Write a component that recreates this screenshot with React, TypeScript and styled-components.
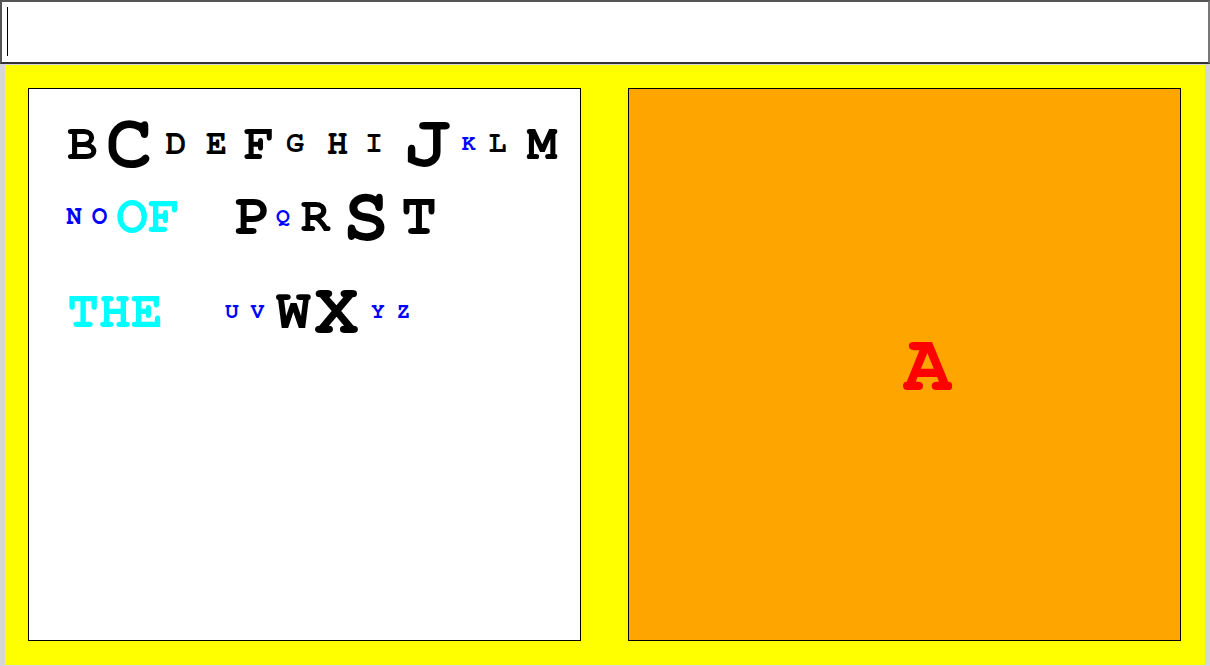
import React from "react";
import styled, { createGlobalStyle } from "styled-components";

const CAP = 0.57;
const FONT = `FreeMono, "Liberation Mono", "Courier New", monospace`;

const Global = createGlobalStyle`
  html, body { margin: 0; padding: 0; background: #d6d6d6; }
  body { font-family: ${FONT}; }
`;

const Page = styled.div`
  width: 1210px;
  height: 666px;
  overflow: hidden;
`;

const InputBar = styled.div`
  box-sizing: border-box;
  width: 1210px;
  height: 64px;
  background: #fff;
  border: 2px solid #555;
  border-right-color: #777;
  border-bottom-color: #333;
  padding: 5px 0 0 5px;
`;

const Caret = styled.div`
  width: 1px;
  height: 49px;
  background: #000;
`;

const Stage = styled.div`
  box-sizing: border-box;
  margin: 1px 5px 0;
  height: 600px;
  background: #ffff00;
  padding: 23px 24px 24px 23px;
  display: flex;
  gap: 47px;
`;

const Board = styled.div`
  box-sizing: border-box;
  width: 553px;
  height: 553px;
  border: 1px solid #000;
  background: #fff;
  display: flex;
  flex-direction: column;
  padding-top: 24px;
`;

const Target = styled.div`
  box-sizing: border-box;
  width: 553px;
  height: 553px;
  border: 1px solid #000;
  background: #ffa500;
  display: flex;
  align-items: center;
  justify-content: center;
`;

const Row = styled.div<{ $gap: number }>`
  display: flex;
  align-items: center;
  height: 60px;
  margin-top: ${(p) => p.$gap}px;
`;

const Glyph = styled.span<{ $size: number; $color: string }>`
  display: block;
  font-family: ${FONT};
  font-weight: 700;
  font-size: ${(p) => p.$size}px;
  line-height: 1;
  color: ${(p) => p.$color};
  white-space: pre;
`;

const BigA = styled(Glyph)`
  margin-left: 46px;
`;

type Item = { t: string; cx: number; h: number; c: string };

const K = "#000";
const B = "#0000ff";
const CY = "#00ffff";

const rows: { gap: number; items: Item[] }[] = [
  {
    gap: 0,
    items: [
      { t: "B", cx: 82.5, h: 29, c: K },
      { t: "C", cx: 129, h: 44, c: K },
      { t: "D", cx: 176, h: 20, c: K },
      { t: "E", cx: 216.5, h: 20, c: K },
      { t: "F", cx: 259, h: 29, c: K },
      { t: "G", cx: 295, h: 17, c: K },
      { t: "H", cx: 337.5, h: 20, c: K },
      { t: "I", cx: 374, h: 17, c: K },
      { t: "J", cx: 427.5, h: 43, c: K },
      { t: "K", cx: 468.5, h: 13, c: B },
      { t: "L", cx: 497.5, h: 17, c: K },
      { t: "M", cx: 542, h: 29, c: K },
    ],
  },
  {
    gap: 13,
    items: [
      { t: "N", cx: 74, h: 15, c: B },
      { t: "O", cx: 99.5, h: 15, c: B },
      { t: "OF", cx: 148, h: 30, c: CY },
      { t: "P", cx: 253, h: 34, c: K },
      { t: "Q", cx: 283, h: 13, c: B },
      { t: "R", cx: 316, h: 28, c: K },
      { t: "S", cx: 366, h: 44, c: K },
      { t: "T", cx: 419, h: 34, c: K },
    ],
  },
  {
    gap: 35,
    items: [
      { t: "THE", cx: 115, h: 30, c: CY },
      { t: "U", cx: 232, h: 13, c: B },
      { t: "V", cx: 257.5, h: 13, c: B },
      { t: "W", cx: 293.5, h: 33, c: K },
      { t: "X", cx: 336.5, h: 42, c: K },
      { t: "Y", cx: 378, h: 13, c: B },
      { t: "Z", cx: 403.5, h: 13, c: B },
    ],
  },
];

const ORIGIN = 29;

function LetterRow({ gap, items }: { gap: number; items: Item[] }) {
  let right = ORIGIN;
  return (
    <Row $gap={gap}>
      {items.map((it, i) => {
        const fs = Math.round(it.h / CAP);
        const w = 0.6 * fs * it.t.length;
        const left = it.cx - w / 2;
        const ml = left - right;
        right = left + w;
        return (
          <Glyph key={i} $size={fs} $color={it.c} style={{ marginLeft: ml }}>
            {it.t}
          </Glyph>
        );
      })}
    </Row>
  );
}

export default function App() {
  return (
    <Page>
      <Global />
      <InputBar>
        <Caret />
      </InputBar>
      <Stage>
        <Board>
          {rows.map((r, i) => (
            <LetterRow key={i} gap={r.gap} items={r.items} />
          ))}
        </Board>
        <Target>
          <BigA $size={Math.round(47 / CAP)} $color="#ff0000">
            A
          </BigA>
        </Target>
      </Stage>
    </Page>
  );
}
